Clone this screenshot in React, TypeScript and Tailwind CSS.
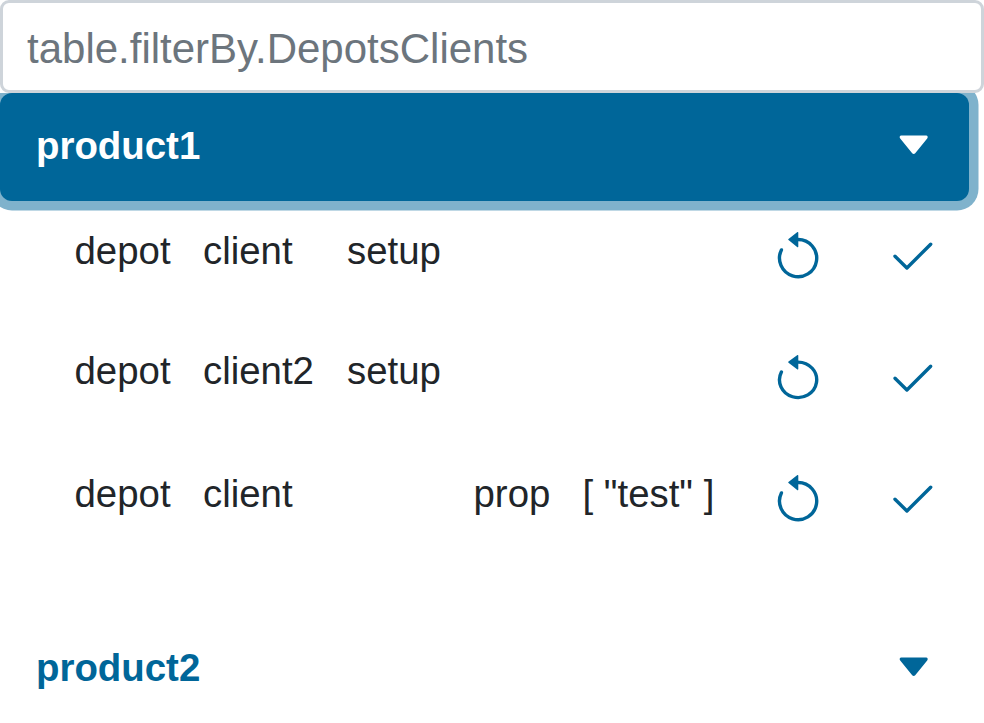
type IconProps = { className: string };

const ResetIcon = ({ className }: IconProps) => (
  <svg viewBox="0 0 44 48" preserveAspectRatio="none" fill="none" className={className}>
    <path d="M22.1 8.5A18.6 18.6 0 1 1 5.4 18.9" stroke="currentColor" strokeWidth="3.4" strokeLinecap="round" />
    <path d="M21.1 1.2a.7.7 0 0 1 1.2.5v13.8a.7.7 0 0 1-1.2.5l-8.6-6.9a.7.7 0 0 1 0-1.1z" fill="currentColor" />
  </svg>
);

const CheckIcon = ({ className }: IconProps) => (
  <svg viewBox="0 0 44 32" preserveAspectRatio="none" fill="none" className={className}>
    <path d="M4 16.2 15.9 28 39.7 4.2" stroke="currentColor" strokeWidth="3.4" strokeLinecap="round" strokeLinejoin="round" />
  </svg>
);

const CaretIcon = () => (
  <svg viewBox="0 0 30 20" className="h-[20px] w-[30px] shrink-0" fill="currentColor">
    <path d="M2.3.5h24.8c1.6 0 2.1 1.8 1.1 3L16.2 18.2c-.9 1-2.1 1-3 0L1.2 3.5C.2 2.3.7.5 2.3.5z" />
  </svg>
);

type Row = {
  client: string;
  setup: string;
  prop: string;
  value: string;
  height: string;
  reset: string;
  check: string;
};

const rows: Row[] = [
  { client: "client", setup: "setup", prop: "", value: "", height: "h-[120px]", reset: "h-[48px]", check: "mt-[9px] h-[32px]" },
  { client: "client2", setup: "setup", prop: "", value: "", height: "h-[123px]", reset: "mt-[3px] h-[45.7px]", check: "mt-[11px] h-[32px]" },
  { client: "client", setup: "", prop: "prop", value: '[ "test" ]', height: "h-[121px]", reset: "h-[48px]", check: "mt-[9px] h-[32px]" },
];

export default function App() {
  return (
    <div className="h-[723px] w-[984px] overflow-hidden bg-white font-['Liberation_Sans',Arial,sans-serif] text-[38.4px] leading-[58px] text-[#212529]">
      <input
        aria-label="filter"
        placeholder="table.filterBy.DepotsClients"
        className="relative z-10 block h-[93px] w-full rounded-[9px] border-[3px] border-[#ced4da] bg-white px-[24px] pt-[5px] text-[42px] placeholder:text-[#6c757d] placeholder:opacity-100"
      />
      <div className="h-[120px] overflow-hidden">
        <button className="flex h-[108px] w-[969px] items-center justify-between rounded-[12px] bg-[#006699] pr-[40px] pl-[36px] font-bold text-white shadow-[0_0_0_9.5px_rgba(0,102,153,0.5)]">
          <span className="-mt-[2px]">product1</span>
          <span className="-mt-[5px]"><CaretIcon /></span>
        </button>
      </div>
      <div className="pt-[18px] pl-[74.5px]">
        {rows.map((row, i) => (
          <div key={i} className={`flex items-start ${row.height}`}>
            <span className="-mt-[9px] w-[128.5px]">depot</span>
            <span className="-mt-[9px] w-[144px]">{row.client}</span>
            <span className="-mt-[9px] w-[126.5px]">{row.setup}</span>
            <span className="-mt-[9px] w-[109px]">{row.prop}</span>
            <span className="-mt-[9px] w-[193.5px] whitespace-nowrap">{row.value}</span>
            <ResetIcon className={`w-[44px] shrink-0 text-[#006699] ${row.reset}`} />
            <CheckIcon className={`ml-[71px] w-[44px] shrink-0 text-[#006699] ${row.check}`} />
          </div>
        ))}
      </div>
      <button className="mt-[20px] flex h-[108px] w-[969px] items-center justify-between pr-[40px] pl-[36px] font-bold text-[#006699]">
        <span className="-mt-[2px]">product2</span>
        <span className="-mt-[5px]"><CaretIcon /></span>
      </button>
    </div>
  );
}
